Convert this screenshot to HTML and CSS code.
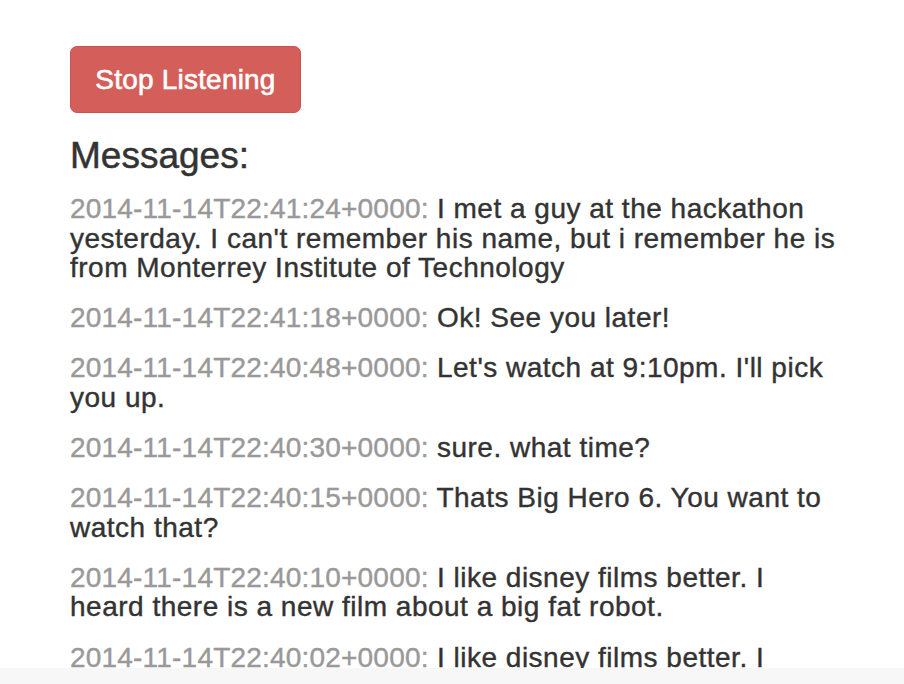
FILE: index.html
```html
<!DOCTYPE html>
<html>
<head>
<meta charset="utf-8">
<link rel="stylesheet" href="styles.css">
</head>
<body>
<div class="page">
  <button class="btn-stop">Stop Listening</button>
  <h3 class="title">Messages:</h3>
  <div class="messages">
    <p class="msg"><span class="time">2014-11-14T22:41:24+0000:</span> I met a guy at the hackathon yesterday. I can't remember his name, but i remember he is from Monterrey Institute of Technology</p>
    <p class="msg"><span class="time">2014-11-14T22:41:18+0000:</span> Ok! See you later!</p>
    <p class="msg"><span class="time">2014-11-14T22:40:48+0000:</span> Let's watch at 9:10pm. I'll pick you up.</p>
    <p class="msg"><span class="time">2014-11-14T22:40:30+0000:</span> sure. what time?</p>
    <p class="msg"><span class="time">2014-11-14T22:40:15+0000:</span> Thats Big Hero 6. You want to watch that?</p>
    <p class="msg"><span class="time">2014-11-14T22:40:10+0000:</span> I like disney films better. I heard there is a new film about a big fat robot.</p>
    <p class="msg"><span class="time">2014-11-14T22:40:02+0000:</span> I like disney films better. I heard there is a new film about a big fat robot.</p>
  </div>
</div>
<div class="bottom-bar"></div>
</body>
</html>
```
FILE: styles.css
```css
html, body {
  margin: 0;
  padding: 0;
  background: #ffffff;
  overflow: hidden;
  height: 684px;
}
body {
  font-family: "Liberation Sans", Arial, Helvetica, sans-serif;
  color: #333333;
}
.page {
  padding: 46px 0 0 70px;
  width: 771px;
}
.btn-stop {
  display: block;
  box-sizing: border-box;
  width: 231px;
  height: 67px;
  margin: 0;
  padding: 0;
  background: #d45f5a;
  border: 1px solid #c9534e;
  border-radius: 7px;
  color: #ffffff;
  font-family: "Liberation Sans", Arial, sans-serif;
  font-size: 28px;
  letter-spacing: 0.2px;
  -webkit-text-stroke: 0.6px #ffffff;
  text-align: center;
}
.title {
  margin: 23px 0 18px 0;
  font-size: 37px;
  font-weight: normal;
  line-height: 40px;
  color: #333333;
  -webkit-text-stroke: 0.5px #333333;
}
.messages {
  display: flex;
  flex-direction: column;
  gap: 20.7px;
}
.msg {
  margin: 0;
  font-size: 28px;
  line-height: 29.5px;
  letter-spacing: 0.5px;
  -webkit-text-stroke: 0.4px #333333;
}
.time {
  color: #999999;
  letter-spacing: 0.2px;
  -webkit-text-stroke: 0.4px #999999;
}
.bottom-bar {
  position: fixed;
  left: 0;
  right: 0;
  bottom: 0;
  height: 16px;
  background: #f7f7f7;
}
```
